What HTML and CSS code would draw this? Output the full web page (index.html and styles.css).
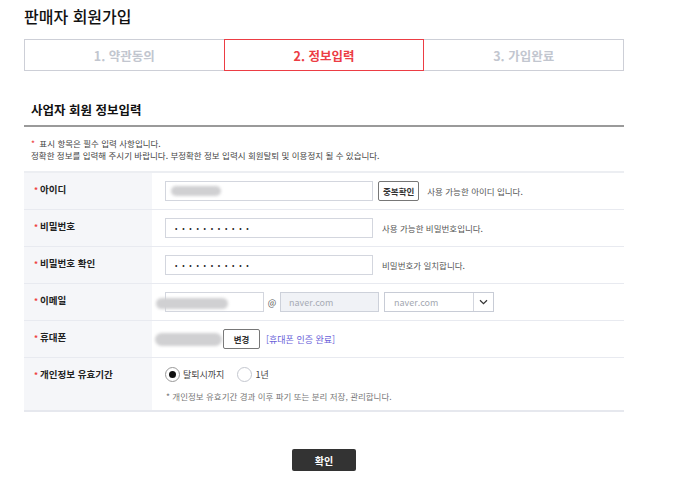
FILE: index.html
```html
<!DOCTYPE html>
<html lang="ko">
<head>
<meta charset="utf-8">
<title>판매자 회원가입</title>
<link rel="stylesheet" href="styles.css">
</head>
<body>
<div class="page">
  <h1 class="title">판매자 회원가입</h1>
  <div class="steps">
    <div class="step">1. 약관동의</div>
    <div class="step active">2. 정보입력</div>
    <div class="step">3. 가입완료</div>
  </div>

  <h2 class="section">사업자 회원 정보입력</h2>
  <div class="notes">
    <p><span class="req">*</span> 표시 항목은 필수 입력 사항입니다.</p>
    <p>정확한 정보를 입력해 주시기 바랍니다. 부정확한 정보 입력시 회원탈퇴 및 이용정지 될 수 있습니다.</p>
  </div>

  <div class="form">
    <div class="row">
      <div class="label"><span class="req">*</span>아이디</div>
      <div class="value">
        <div class="input wide"><span class="blob blob-id"></span></div>
        <button class="btn-sm">중복확인</button>
        <span class="msg msg-id">사용 가능한 아이디 입니다.</span>
      </div>
    </div>
    <div class="row">
      <div class="label"><span class="req">*</span>비밀번호</div>
      <div class="value">
        <div class="input wide"><span class="dots">•••••••••••</span></div>
        <span class="msg">사용 가능한 비밀번호입니다.</span>
      </div>
    </div>
    <div class="row">
      <div class="label"><span class="req">*</span>비밀번호 확인</div>
      <div class="value">
        <div class="input wide"><span class="dots">•••••••••••</span></div>
        <span class="msg">비밀번호가 일치합니다.</span>
      </div>
    </div>
    <div class="row">
      <div class="label"><span class="req">*</span>이메일</div>
      <div class="value">
        <div class="input email"><span class="blob blob-email"></span></div>
        <span class="at">@</span>
        <div class="input email disabled">naver.com</div>
        <div class="select">
          <span class="select-text">naver.com</span>
          <span class="select-arrow">
            <svg width="9" height="6" viewBox="0 0 9 6"><path d="M1 1.2 L4.5 4.6 L8 1.2" fill="none" stroke="#333" stroke-width="1.2"/></svg>
          </span>
        </div>
      </div>
    </div>
    <div class="row">
      <div class="label"><span class="req">*</span>휴대폰</div>
      <div class="value">
        <span class="phone"><span class="blob blob-phone"></span></span>
        <button class="btn-sm btn-change">변경</button>
        <span class="link">[휴대폰 인증 완료]</span>
      </div>
    </div>
    <div class="row last">
      <div class="label"><span class="req">*</span>개인정보 유효기간</div>
      <div class="value column">
        <div class="radios">
          <label class="radio"><span class="circle checked"></span>탈퇴시까지</label>
          <label class="radio"><span class="circle"></span>1년</label>
        </div>
        <p class="hint">* 개인정보 유효기간 경과 이후 파기 또는 분리 저장, 관리합니다.</p>
      </div>
    </div>
  </div>

  <div class="actions">
    <button class="btn-submit">확인</button>
  </div>
</div>
</body>
</html>
```

FILE: styles.css
```css
* { box-sizing: border-box; }
html, body { margin: 0; padding: 0; background: #fff; }
body {
  font-family: "Noto Sans CJK KR", "Noto Sans", sans-serif;
  color: #222;
}
.page {
  width: 648px;
  padding: 6px 24px 0 24px;
}
.title {
  margin: 0;
  font-size: 16px;
  line-height: 20px;
  font-weight: 500;
  color: #111;
}
.steps {
  display: flex;
  margin-top: 13px;
  height: 32px;
}
.step {
  flex: 1;
  display: flex;
  align-items: center;
  justify-content: center;
  border: 1px solid #cdcfd7;
  margin-left: -1px;
  font-size: 12.5px;
  font-weight: 700;
  color: #c2c6cf;
}
.step:first-child { margin-left: 0; }
.step.active {
  border-color: #ec3d44;
  color: #ec3d44;
  position: relative;
  z-index: 1;
}
.section {
  margin: 31px 0 0 0;
  padding: 0 7px 7px;
  font-size: 12.5px;
  line-height: 16px;
  font-weight: 700;
  color: #111;
  border-bottom: 2px solid #9a9a9a;
}
.notes {
  margin-top: 10px;
  padding-left: 7px;
}
.notes p {
  margin: 0;
  font-size: 8.5px;
  line-height: 12px;
  color: #444;
}
.req {
  color: #ee3b3b;
  margin-right: 2px;
}
.form {
  margin-top: 10px;
  border-top: 2px solid #eceef2;
  border-bottom: 2px solid #e6e8ee;
}
.row {
  display: flex;
  border-bottom: 1px solid #e8eaf0;
}
.row.last { border-bottom: 0; }
.label {
  width: 128px;
  flex: none;
  background: #f5f6f9;
  padding: 9px 0 0 10px;
  font-size: 9.5px;
  line-height: 14px;
  font-weight: 700;
  color: #222;
}
.label .req { font-size: 8px; margin-right: 2px; }
.value {
  flex: 1;
  display: flex;
  align-items: center;
  padding: 8px 0 8px 13px;
  min-height: 36px;
}
.value.column {
  flex-direction: column;
  align-items: flex-start;
}
.input {
  height: 20px;
  border: 1px solid #d3d6de;
  background: #fff;
  display: flex;
  align-items: center;
  padding-left: 9px;
  position: relative;
  font-size: 9px;
  color: #aab;
}
.input.wide { width: 208px; }
.input.email { width: 99px; }
.input.disabled {
  background: #f0f2f6;
  border-color: #cdd1da;
  color: #a7abb5;
  padding-left: 8px;
}
.dots {
  font-size: 7px;
  letter-spacing: 4.75px;
  color: #222;
  padding-left: 0;
}
.blob {
  position: absolute;
  background: #d0d0d2;
  border-radius: 7px;
  filter: blur(1.4px);
}
.blob-id { left: 5px; top: 4px; width: 50px; height: 10px; }
.blob-email { left: -10px; top: 5px; width: 72px; height: 11px; }
.blob-phone { left: -10px; top: -7px; width: 67px; height: 13px; }
.btn-sm {
  height: 20px;
  margin-left: 5px;
  padding: 0 4px;
  border: 1px solid #777;
  border-radius: 2px;
  background: #fff;
  font-family: inherit;
  font-size: 8.5px;
  font-weight: 700;
  color: #333;
  line-height: 18px;
}
.msg {
  margin-left: 9px;
  font-size: 8.5px;
  color: #555;
}
.msg-id { margin-left: 8px; }
.at {
  width: 16px;
  text-align: center;
  font-size: 9px;
  color: #555;
}
.select {
  margin-left: 5px;
  width: 110px;
  height: 20px;
  border: 1px solid #c8ccd6;
  display: flex;
  align-items: center;
}
.select-text {
  flex: 1;
  padding-left: 9px;
  font-size: 9px;
  color: #a4a8b2;
}
.select-arrow {
  width: 20px;
  height: 18px;
  border-left: 1px solid #d3d6de;
  display: flex;
  align-items: center;
  justify-content: center;
}
.phone {
  width: 58px;
  height: 20px;
  position: relative;
  display: inline-block;
}
.phone .blob { top: 4px; }
.btn-change {
  margin-left: 0;
  width: 37px;
  padding: 0;
}
.link {
  margin-left: 6px;
  font-size: 9px;
  color: #6a5fd9;
}
.radios {
  display: flex;
  align-items: center;
  height: 16px;
}
.radio {
  display: flex;
  align-items: center;
  font-size: 9px;
  color: #444;
  margin-right: 13px;
}
.circle {
  width: 15px;
  height: 15px;
  border-radius: 50%;
  border: 1px solid #c4c7cf;
  margin-right: 3px;
  display: inline-flex;
  align-items: center;
  justify-content: center;
  background: #fff;
}
.circle.checked { border-color: #999; }
.circle.checked::after {
  content: "";
  width: 7px;
  height: 7px;
  border-radius: 50%;
  background: #111;
}
.hint {
  margin: 8px 0 0 1px;
  font-size: 8.5px;
  line-height: 12px;
  color: #777;
}
.actions {
  display: flex;
  justify-content: center;
  margin-top: 37px;
}
.btn-submit {
  width: 64px;
  height: 22px;
  border: 0;
  border-radius: 2px;
  background: #333;
  color: #fff;
  font-family: inherit;
  font-size: 10px;
  font-weight: 700;
}
```
